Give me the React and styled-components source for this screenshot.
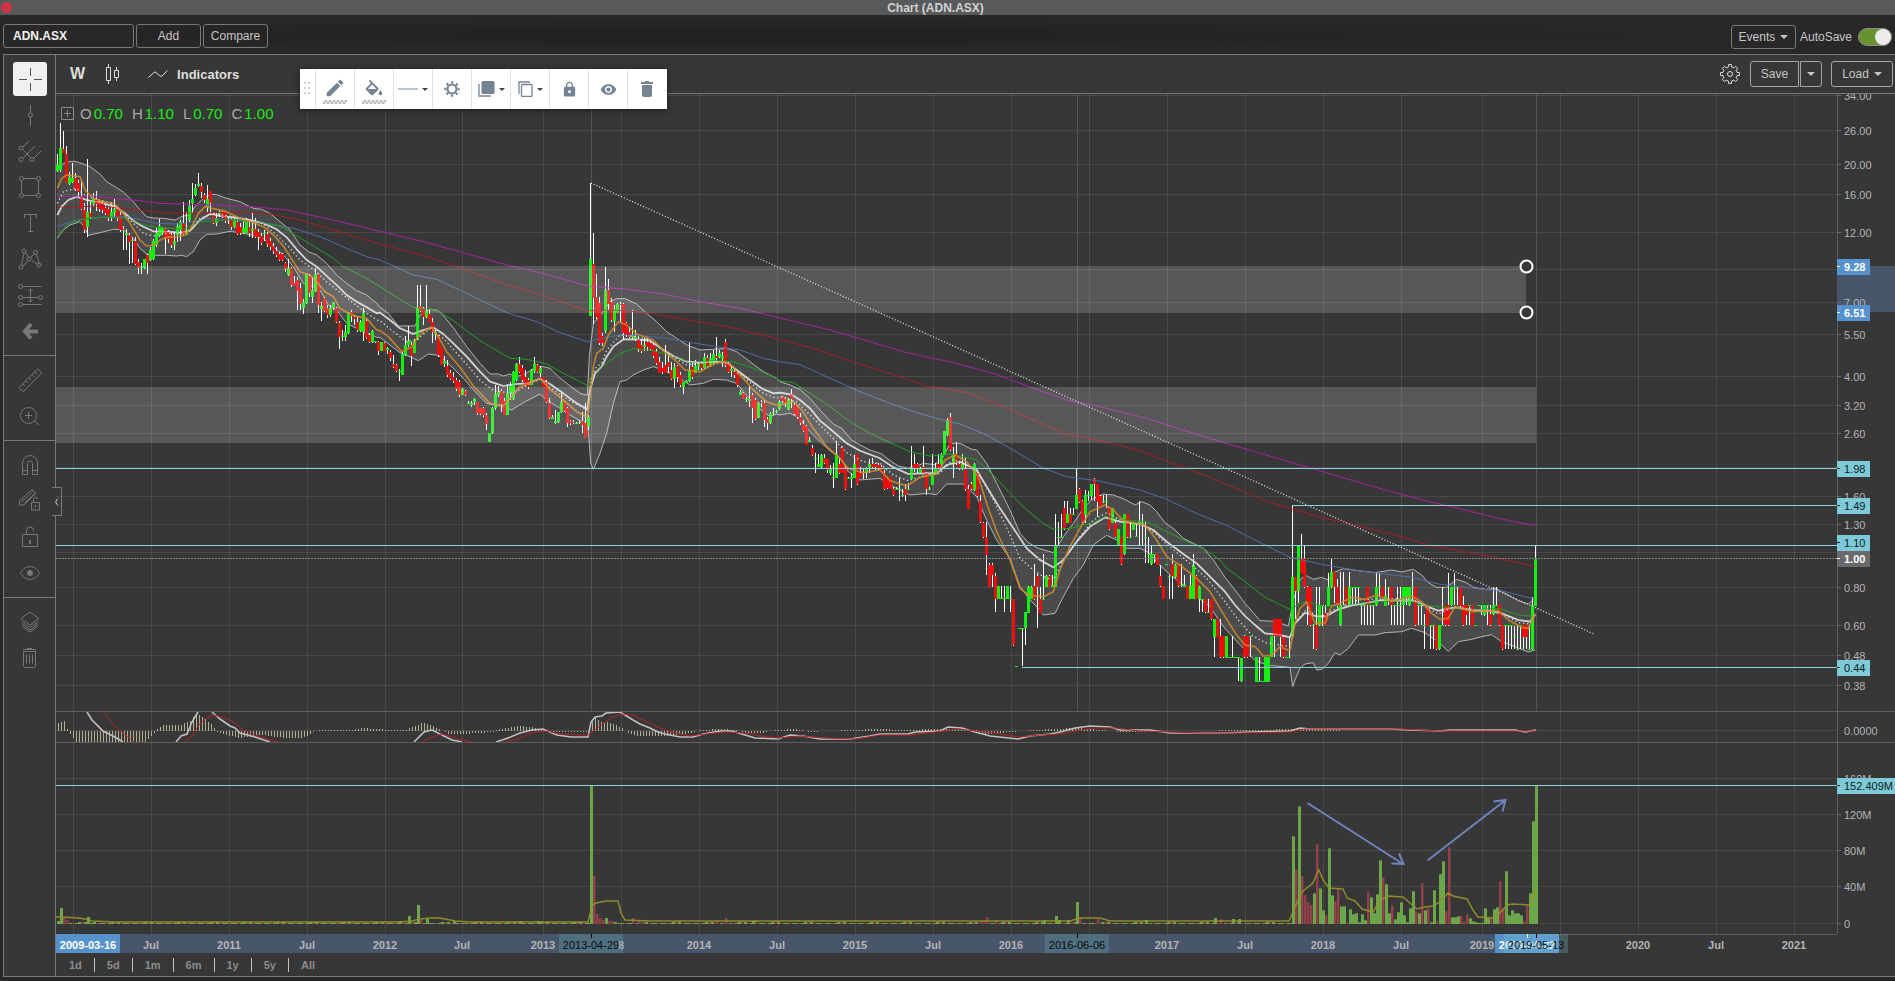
import React, { useState } from "react"
import styled, { createGlobalStyle, css } from "styled-components"
import { MdEdit, MdLock, MdVisibility } from "react-icons/md"

const panelColor = "#373737"
const headerColor = "#292728"
const borderColor = "#77787a"
const mutedColor = "#a9a9a9"
const levelColor = "#8fd0dd"
const tagColor = "#7fcad8"
const selectionColor = "#48566b"
const activeColor = "#5692cb"
const greenColor = "#12f012"
const redColor = "#ee0c0c"

const GlobalStyle = createGlobalStyle`
  * {
    box-sizing: border-box;
  }
  body {
    margin: 0;
    background: ${headerColor};
    font-family: "Liberation Sans", Arial, sans-serif;
    font-size: 12px;
  }
  button,
  input {
    font-family: inherit;
  }
`

const Window = styled.div`
  display: flex;
  flex-flow: column;
  min-height: 100vh;
  background: ${headerColor};
`

const TitleBar = styled.header`
  display: flex;
  align-items: center;
  height: 15px;
  padding: 0 36px 0 1px;
  background: #58595b;
  h1 {
    flex: 1;
    margin: 0;
    font-size: 12px;
    line-height: 14px;
    text-align: center;
    color: #d2d2d2;
  }
`

const CloseButton = styled.button`
  width: 11px;
  height: 11px;
  padding: 0;
  border: 0;
  border-radius: 50%;
  background: #cf3346;
`

const SymbolBar = styled.div`
  display: flex;
  align-items: center;
  gap: 2px;
  height: 39px;
  padding: 3px 3px 0;
  background: radial-gradient(ellipse at 40% 50%, #211f20 0%, #292728 60%);
`

const SymbolInput = styled.input`
  width: 131px;
  height: 24px;
  padding: 0 9px;
  border: 1px solid ${borderColor};
  border-radius: 3px;
  background: #292728;
  color: #f2f2f2;
  font-size: 12px;
  font-weight: bold;
`

const BarButton = styled.button`
  display: flex;
  align-items: center;
  justify-content: center;
  gap: 5px;
  width: ${(props) => props.$width || 65}px;
  height: 24px;
  margin-right: ${(props) => props.$gap || 0}px;
  padding: 0;
  border: 1px solid ${borderColor};
  border-radius: 3px;
  background: transparent;
  color: #c6c6c6;
  font-size: 12px;
  ${(props) =>
    props.$light &&
    css`
      height: 26px;
      border-color: #a5a5a5;
      border-radius: ${props.$radius || "3px"};
    `}
`

const Spacer = styled.div`
  flex: 1;
`

const Settings = styled.div`
  display: flex;
  align-items: center;
  gap: 2px;
  padding-top: 2px;
`

const SwitchLabel = styled.label`
  display: flex;
  align-items: center;
  gap: 6px;
  padding-left: 2px;
  color: #c6c6c6;
  font-size: 12px;
`

const Switch = styled.input`
  appearance: none;
  width: 34px;
  height: 18px;
  margin: 0;
  border: 1px solid #8c8c8c;
  border-radius: 9px;
  background: ${(props) => (props.checked ? "#66922f" : "#555")};
  &::before {
    content: "";
    display: block;
    width: 16px;
    height: 16px;
    margin-left: ${(props) => (props.checked ? "16px" : "0")};
    border-radius: 50%;
    background: #ececec;
  }
`

const Panel = styled.main`
  display: flex;
  margin-left: 3px;
  border: 1px solid ${borderColor};
  border-right: 0;
  background: ${panelColor};
`

const Sidebar = styled.aside`
  position: relative;
  width: 52px;
  border-right: 1px solid ${borderColor};
`

const ToolGroup = styled.div`
  display: flex;
  flex-flow: column;
  align-items: center;
  padding: 6px 0;
  border-bottom: ${(props) => (props.$last ? "0" : `1px solid ${borderColor}`)};
`

const ToolButton = styled.button`
  display: flex;
  align-items: center;
  justify-content: center;
  width: 36px;
  height: 36px;
  padding: 0;
  border: 1px solid transparent;
  border-radius: 4px;
  background: ${(props) => (props.$active ? "#f0f0f2" : "transparent")};
  background-clip: padding-box;
  color: ${(props) => (props.$active ? "#555" : "#77787a")};
  svg {
    fill: none;
    stroke: currentColor;
  }
`

const CollapseButton = styled.button`
  position: absolute;
  top: 432px;
  right: -7px;
  display: flex;
  align-items: center;
  justify-content: center;
  width: 10px;
  height: 29px;
  padding: 0;
  border: 1px solid ${borderColor};
  border-left: 0;
  background: ${panelColor};
`

const Content = styled.section`
  position: relative;
  flex: 1;
  min-width: 0;
`

const ChartBar = styled.div`
  display: flex;
  align-items: center;
  height: 39px;
  padding: 0 2px 0 14px;
  border-bottom: 1px solid ${borderColor};
`

const PlainButton = styled.button`
  display: flex;
  align-items: center;
  gap: 9px;
  margin-right: ${(props) => props.$gap || 0}px;
  padding: 0;
  border: 0;
  background: transparent;
  color: #dedede;
  font-size: ${(props) => props.$size || 13}px;
  font-weight: bold;
`

const Caret = styled.span`
  width: 0;
  border: ${(props) => (props.$small ? 3 : 4)}px solid transparent;
  border-top-color: ${(props) => (props.$small ? "#444" : "#c6c6c6")};
  border-bottom: 0;
`

const FloatingBar = styled.div`
  position: absolute;
  top: 14px;
  left: 244px;
  display: flex;
  height: 40px;
  padding-right: 1px;
  background: #fff;
  box-shadow: 0 1px 6px rgba(0, 0, 0, 0.6);
`

const Grip = styled.div`
  display: flex;
  align-items: center;
  justify-content: center;
  width: 15px;
`

const FloatButton = styled.button`
  display: flex;
  align-items: center;
  justify-content: center;
  gap: 4px;
  width: 39px;
  padding: 0;
  border: 0;
  border-left: 1px solid #e1e1e4;
  background: #fff;
  color: #758494;
`

const Swatch = styled.span`
  display: flex;
  flex-flow: column;
  align-items: center;
  gap: 1px;
  padding-top: 3px;
  &::after {
    content: "";
    width: 24px;
    height: 4px;
    background: repeating-conic-gradient(#b9b9b9 0 25%, #e6e6e6 0 50%) 0 0 / 4px 4px;
  }
`

const ChartRow = styled.div`
  display: flex;
`

const Plot = styled.svg`
  flex: 1;
  min-width: 0;
  height: 859px;
  overflow: hidden;
`

const Axis = styled.svg`
  width: 58px;
  height: 859px;
  overflow: hidden;
`

const Legend = styled.div`
  position: absolute;
  top: 50px;
  left: 5px;
  display: flex;
  align-items: center;
  gap: 9px;
  color: ${mutedColor};
  font-size: 15px;
  line-height: 17px;
  svg {
    margin-right: -3px;
  }
  b {
    padding-left: 2px;
    color: ${greenColor};
    font-weight: normal;
  }
`

const RangeBar = styled.nav`
  display: flex;
  align-items: center;
  height: 23px;
  padding-left: 1px;
`

const RangeButton = styled.button`
  height: 14px;
  padding: 0 12px;
  border: 0;
  border-right: ${(props) => (props.$last ? "0" : "1px solid #c4c4c4")};
  background: transparent;
  color: #8c8c8c;
  font-size: 11px;
  font-weight: bold;
  line-height: 14px;
`

/*
 * Series data. Values are stored in thirds of a pixel, split into blocks
 * that each have their own origin.
 * Candle: colour x high low bodyTop bodyBottom
 */
const blocks = [
  {
    x: 0,
    y: 0,
    candles: `g 172 462 515 495 512;g 181 369 515 445 510;r 190 393 460 448 460;r 199 438 550 462 550;g 208 515 555 530 552;
g 217 490 548 535 545;r 226 518 572 535 568;r 235 540 590 550 575;r 244 540 630 590 628;r 253 608 700 630 690;g 262 478 710 637 682;
r 271 605 655 638 652;g 280 580 620 597 612;r 289 573 632 600 612;r 298 600 635 605 628;r 307 600 640 610 630;r 316 615 645 625 638;
r 325 620 664 628 652;g 334 605 664 635 650;g 343 598 650 628 640;r 352 620 662 627 655;r 361 635 695 645 690;r 370 678 750 686 690;
g 379 688 750 698 704;r 388 700 792 705 726;g 397 715 790 720 724;r 406 712 795 722 792;r 415 778 822 785 805;g 424 790 822 800 804;
g 433 778 808 778 805;r 442 762 822 765 790;g 451 740 782 750 780;g 460 718 780 722 778;g 469 685 740 698 736;g 478 657 712 678 708;
g 487 680 705 684 700;r 496 685 762 688 714;r 505 690 730 696 718;r 514 700 745 704 736;g 523 695 750 722 736;g 532 668 725 680 704;
g 541 660 722 665 690;r 550 606 705 668 702;g 559 635 705 690 704;g 568 600 665 618 660;g 577 550 640 597 608;g 586 552 588 564 584;
g 595 519 560 552 558;r 604 550 595 558 575;r 613 580 610 586 600;g 622 556 635 596 620;r 631 573 640 573 608;r 640 640 672 645 668;
g 649 640 678 655 668;g 658 630 650 636 642;r 667 632 655 636 650;r 676 635 668 638 662;g 685 650 672 656 660;r 694 655 690 658 680;
g 703 650 685 658 680;r 712 652 705 665 702;r 721 670 705 680 700;g 730 662 702 685 698;g 739 655 700 664 700;r 748 660 712 680 700;
g 757 635 715 688 692;r 766 655 715 688 712;r 775 688 750 696 712;r 784 700 735 708 728;g 793 690 722 698 702;r 802 695 740 702 732;
r 811 715 750 722 742;r 820 730 762 738 752;r 829 740 770 752 766;r 838 755 782 762 780;r 847 758 782 762 780;r 856 785 815 790 808;
g 865 778 828 805 826;r 874 800 860 804 856;r 883 828 858 850 858;r 892 830 930 840 872;r 901 850 930 865 912;g 910 898 942 905 925;
g 919 820 912 822 910;r 928 822 890 828 880;g 937 830 908 870 892;g 946 803 875 822 872;r 955 820 940 822 915;g 964 905 962 918 926;
r 973 890 935 894 932;r 982 915 955 925 945;g 991 915 952 925 945;g 1000 905 930 908 925;r 1009 922 968 925 965;r 1018 962 1048 968 1012;
g 1027 990 1022 1008 1012;g 1036 975 1022 995 1012;g 1045 935 1002 936 1000;r 1054 930 965 936 948;r 1063 945 975 952 958;
r 1072 948 995 965 990;g 1081 960 995 965 992;g 1090 925 1022 940 995;r 1099 958 1018 962 1014;r 1108 1000 1030 1005 1025;
g 1117 990 1028 992 1025;g 1126 1022 1028 1022 1026;r 1135 1022 1065 1025 1053`,
    upper:
      "172,510 190,490 210,484 225,484 250,492 270,500 300,522 320,545 345,560 370,576 400,605 420,630 440,650 460,654 490,655 525,660 550,648 570,645 585,620 605,600 630,583 650,584 680,595 720,605 760,625 785,628 810,640 840,665 870,690 900,735 925,755 950,765 980,790 1010,825 1040,850 1070,872 1100,885 1130,910",
    lower:
      "172,715 190,690 210,675 240,665 253,680 265,706 300,698 340,688 370,690 400,715 420,745 440,762 460,766 500,766 530,768 545,766 560,770 580,755 600,720 620,703 650,702 690,694 720,698 755,705 790,716 820,740 850,765 880,800 910,850 940,860 960,870 985,915 1010,930 1040,970 1070,985 1100,1000 1130,1012",
    mid: "172,645 185,620 205,600 230,590 260,600 300,608 345,620 375,640 400,662 430,680 460,694 500,695 540,698 570,692 600,660 630,642 660,648 700,652 740,658 790,670 830,688 860,712 890,748 920,780 950,800 980,828 1010,855 1040,885 1070,905 1100,922 1130,940",
    dots: "172,610 190,575 230,565 260,590 300,600 345,615 375,645 400,670 430,700 460,708 500,700 540,700 575,690 600,655 640,640 700,650 790,672 830,705 870,745 900,780 940,808 980,845 1030,885 1080,925 1130,960",
    orange:
      "172,565 185,535 200,525 240,530 255,570 280,595 310,605 345,612 370,640 390,670 420,720 440,738 465,735 480,720 500,712 530,710 555,705 575,680 595,640 615,620 640,626 680,635 720,655 760,668 790,680 820,705 850,738 880,785 900,815 930,825 950,845 975,875 1000,890 1020,925 1045,940 1075,950 1100,955 1130,990",
    green:
      "172,712 200,675 240,660 300,652 380,655 430,675 470,682 550,688 600,665 700,658 760,665 840,678 880,702 940,738 1000,775 1030,800 1090,830",
    blue: "172,680 220,662 300,652 380,650 470,670 540,672 630,655 700,660 800,670 880,685 960,710 1040,745 1100,770",
    red: "172,622 300,618 400,628 500,640 600,638 720,636 800,640 900,660 1000,690",
    purple: "172,590 300,590 400,600 480,610 640,615 760,620 860,630 1000,660",
  },
  {
    x: 1140,
    y: 690,
    candles: `g 4 335 362 335 362;r 13 335 362 338 362;g 22 352 372 354 360;r 31 360 392 366 384;r 40 375 415 402 412;r 49 402 425 405 424;
g 58 418 453 422 426;g 67 365 435 372 434;g 76 318 378 345 376;g 85 288 350 332 345;r 94 335 408 345 378;g 103 328 370 332 368;
g 112 165 330 235 330;r 121 165 246 228 244;r 130 232 285 238 262;g 139 165 265 242 262;r 148 240 275 252 275;r 157 265 340 275 305;
g 166 300 330 306 312;r 175 315 380 320 375;r 184 350 405 352 404;g 193 378 412 392 402;r 202 390 440 408 434;r 211 420 450 428 448;
r 220 425 460 440 452;r 229 445 482 450 478;r 238 450 500 455 495;g 247 475 495 478 494;r 256 480 498 484 496;g 265 514 520 518 522;
g 274 514 530 518 524;g 283 505 525 508 516;r 292 515 555 516 548;r 301 535 555 535 552;r 310 530 560 535 555;r 319 550 600 555 582;
g 328 608 636 610 636;g 337 530 612 535 610;g 346 465 540 492 535;g 355 468 500 485 495;r 364 478 545 482 522;r 373 505 556 512 554;
g 382 462 556 490 554;g 391 455 510 468 490;g 400 422 510 425 508;g 409 400 452 403 450;r 418 380 430 403 425;r 427 405 455 415 450;
r 436 420 470 440 468;r 445 445 478 450 470;g 454 418 466 420 464;g 463 380 430 403 424;r 472 403 430 405 425;g 481 408 440 415 428;
r 490 440 472 442 470;r 499 450 520 455 515;r 508 505 566 518 564;g 517 556 568 562 566;g 526 540 582 572 580;g 535 545 580 545 576;
g 544 490 548 515 545;r 553 512 545 515 542;r 562 530 590 535 580;r 571 570 585 572 580;r 580 570 582 576 580;g 589 576 582 578 582;
g 598 570 582 576 580;r 607 545 610 572 585;r 616 520 625 580 624;g 625 555 600 560 590;g 632 -140 258 88 258;r 641 8 282 102 204;
r 650 132 268 200 262;r 659 200 345 218 340;r 668 310 348 318 338;g 677 112 308 180 304;r 686 147 240 180 222;r 695 205 275 215 270;
g 704 225 305 238 272;g 713 218 250 222 245;r 722 215 275 222 226;r 731 220 330 222 310;r 740 275 320 280 316;r 749 290 325 305 320;
g 758 240 330 315 322;g 767 300 332 322 328;r 776 315 365 328 358;r 785 330 368 345 364;g 794 325 364 345 350;r 803 325 362 335 352;
r 812 335 362 340 358;r 821 340 385 345 378;r 830 358 405 365 400;r 839 380 430 395 428;r 848 395 432 415 426;r 857 345 430 405 428;
r 866 368 430 395 410;r 875 395 450 420 446;g 884 400 475 410 448;r 893 405 455 408 440;r 902 425 470 435 464;g 911 455 492 455 470;
g 920 450 460 452 458;g 929 335 455 420 454;r 938 400 448 412 442;g 947 390 430 408 428;g 956 395 420 403 408;r 965 395 420 400 415;
g 974 368 418 380 415;r 983 375 412 385 408;g 992 368 410 385 405;g 1001 360 405 372 400;r 1010 322 395 378 385;g 1019 360 385 370 380;
g 1028 365 410 378 388;r 1037 328 410 335 405;r 1046 392 430 398 426;g 1055 405 440 418 424;r 1064 415 445 425 434;r 1073 425 470 432 464;
g 1082 480 496 486 494;r 1091 485 508 490 506;g 1100 500 515 506 510;g 1109 465 530 508 512;r 1118 490 580 495 535;r 1127 505 570 510 566;
g 1136 515 565 518 564;r 1145 510 530 515 520;r 1154 510 590 518 570;r 1163 560 600 568 580;g 1172 545 582 552 580;g 1181 535 555 545 550;
g 1190 540 548 542 546;g 1199 510 540 516 538`,
    upper:
      "0,232 25,250 55,288 105,288 120,255 150,238 175,242 195,262 225,300 260,350 300,400 330,432 355,432 370,438 390,432 405,440 430,435 470,410 490,410 510,415 535,440 560,460 600,490 622,496 628,380 640,280 660,258 690,215 710,206 735,206 770,222 800,250 830,275 860,305 890,325 920,345 960,360 1000,358 1040,355 1070,365 1110,395 1150,425 1190,445",
    lower:
      "0,322 30,345 60,368 90,380 115,392 145,372 175,376 210,405 250,445 290,490 320,520 360,528 395,540 430,518 480,492 500,510 540,535 570,555 610,578 622,570 628,640 632,700 640,718 660,670 680,610 700,520 720,455 740,450 760,435 790,420 820,410 850,420 890,440 930,465 970,460 1000,448 1040,450 1070,460 1090,485 1120,520 1150,545 1170,560 1190,552",
    mid: "0,248 30,270 60,295 100,312 130,300 160,292 190,312 220,340 260,380 300,425 330,455 370,468 410,462 440,460 480,446 510,462 550,490 590,520 622,538 630,480 645,430 665,410 680,380 700,350 730,328 770,328 810,332 850,360 880,378 920,395 960,398 1000,395 1040,398 1070,420 1110,450 1150,478 1180,490",
    dots: "0,272 40,305 80,335 110,330 150,295 190,325 240,380 300,450 340,482 400,490 440,465 480,448 520,480 570,512 622,540 632,450 650,410 665,400 680,360 720,315 770,320 810,330 860,370 920,405 1000,395 1050,402 1100,450 1150,490 1190,505",
    orange:
      "0,302 25,320 65,365 95,352 110,325 135,300 155,292 175,320 200,365 240,412 280,468 330,520 370,528 390,505 420,470 445,462 480,445 510,478 550,510 590,545 622,562 630,500 640,410 650,370 670,355 685,315 715,275 740,285 770,312 820,330 850,362 890,395 915,420 960,425 1000,402 1030,395 1050,402 1085,440 1120,480 1160,515 1190,525",
    green:
      "0,170 50,202 100,232 170,240 220,272 300,332 390,385 440,388 500,402 560,435 622,466 640,430 680,400 720,370 760,356 810,360 870,375 930,398 1000,392 1060,395 1120,415 1180,440",
    blue: "0,90 100,135 170,148 260,190 380,248 470,275 540,308 622,335 700,318 760,315 860,325 960,342 1080,360 1150,385",
    red: "0,42 150,82 260,120 370,162 470,190 622,242 700,240 800,248 900,265 1050,292",
    purple: "0,4 130,35 250,68 380,105 500,133 622,168 740,178 850,192 960,215 1080,235",
  },
  {
    x: 2340,
    y: 990,
    candles: `r 8 198 220 202 212;r 17 200 232 205 222;g 26 205 240 208 236;r 35 178 235 192 208;r 44 215 255 226 252;r 53 225 268 230 262;
r 62 250 285 262 280;r 71 270 305 282 302;r 80 285 346 288 344;g 89 320 336 330 335;r 98 345 378 354 374;g 107 370 428 384 388;
g 116 373 412 402 412;g 125 373 415 376 412;r 134 372 402 385 400;r 143 388 428 388 420;g 152 405 435 415 430;g 161 400 475 440 445;
g 170 335 445 372 445;r 179 380 432 402 430;r 188 348 430 350 428;r 197 410 480 415 478;g 206 440 448 443 447;g 215 430 474 440 446;
g 224 375 445 402 444;r 233 373 465 373 462;r 242 410 440 430 440;g 251 415 446 426 430;g 260 412 445 418 430;g 269 388 430 402 412;
r 278 385 415 402 412;r 287 400 420 402 412;r 296 400 420 404 414;r 305 405 430 412 428;r 314 420 480 428 478;r 323 440 478 445 475;
r 332 440 478 440 478;r 341 470 497 478 496;g 350 472 480 476 480;g 359 445 514 476 480;g 368 478 500 494 498;r 377 462 512 478 496;
g 386 460 478 476 480;g 395 348 448 416 446;r 404 372 425 402 418;r 413 400 430 402 415;g 422 410 432 414 430;r 431 348 430 410 428;
r 440 425 494 430 478;g 449 472 480 476 480;g 458 372 464 428 464;g 467 400 430 415 430;r 476 372 415 403 415;g 485 370 405 375 403;
g 494 302 375 304 374;g 503 265 318 270 314;r 512 248 362 262 360;g 521 350 444 372 400;r 530 335 405 372 400;r 539 395 420 402 415;
g 548 372 420 402 415;r 557 385 482 415 478;r 566 465 538 478 536;r 575 455 480 462 478;g 584 400 482 402 480;r 593 420 500 430 498;
r 602 495 578 512 576;r 611 575 625 578 622;r 620 575 735 622 674;r 629 700 772 704 770;r 638 700 770 704 735;r 647 730 845 737 808;
g 656 768 808 768 806;g 665 768 808 803 808;g 674 768 845 804 808;g 683 768 808 768 806;g 692 768 845 804 808;r 701 808 948 808 946;
g 710 1008 1011 1008 1011;g 719 894 897 894 897;g 728 894 1008 894 897;g 737 845 945 846 895;g 746 768 850 770 848;g 755 768 808 770 808;
r 764 702 810 768 808;r 773 732 893 737 772;r 782 770 850 808 848;g 791 672 808 806 809;g 800 735 770 737 770;r 809 735 770 737 770;
g 818 735 770 766 770;g 827 552 772 646 770;g 836 575 645 620 624;g 845 552 625 620 624;r 854 514 600 534 598;g 863 514 580 552 578;
r 872 534 580 552 578;g 881 534 555 552 555;g 890 416 538 495 536;r 899 475 518 478 515;r 908 510 578 514 576;g 917 480 578 495 555;
g 926 482 512 494 498;g 935 462 510 462 498;r 944 444 512 446 462;r 953 462 560 462 515;r 962 495 535 498 534;g 971 495 520 512 516;
g 980 495 535 512 516;r 989 530 600 534 598;g 998 535 578 535 578;r 1007 570 625 578 622;g 1016 598 648 598 648;r 1025 622 704 622 702;
g 1034 552 674 552 672;r 1043 552 625 552 622;g 1052 575 622 620 623;g 1061 578 600 578 600;g 1070 578 622 619 622;g 1079 514 645 575 578;
g 1088 552 645 578 582;g 1097 575 700 620 623;g 1106 622 700 672 675;g 1115 645 704 672 702;g 1124 672 700 673 676;r 1133 672 705 672 704;
r 1142 704 770 737 768;r 1151 768 808 768 808;g 1160 702 706 702 706;g 1169 735 806 737 740;r 1178 672 806 702 738;g 1187 702 745 704 740;
r 1196 702 770 704 768;g 1205 702 770 766 769;g 1214 735 770 766 770;r 1223 768 808 768 808;g 1232 735 808 768 808;g 1241 672 808 704 806;
r 1250 735 808 737 806;g 1259 768 845 770 808;g 1268 808 845 806 810;r 1277 806 848 808 846;g 1286 808 848 845 848;r 1295 806 870 808 868;
g 1304 866 980 868 920;r 1313 866 920 868 920;r 1322 866 985 918 982;r 1331 918 985 918 982`,
    upper:
      "0,155 30,165 60,178 90,205 120,240 160,282 185,295 215,330 240,345 270,360 305,372 330,392 355,408 385,415 410,408 430,400 465,404 490,380 510,340 540,340 575,358 590,360 620,400 650,460 690,540 720,610 745,638 775,655 820,668 850,620 880,580 910,535 940,505 970,492 1000,495 1035,508 1065,525 1085,515 1110,525 1130,545 1155,578 1185,600 1210,625 1240,640 1270,655 1300,690",
    lower:
      "0,255 30,250 55,262 90,305 120,335 150,362 180,385 205,425 240,450 300,445 330,465 360,480 390,495 440,490 470,494 500,462 550,462 590,500 620,570 650,630 690,685 720,770 750,810 775,835 790,855 825,850 850,800 880,745 910,705 940,645 980,616 1010,630 1040,655 1080,655 1110,670 1135,702 1160,725 1190,750 1220,772 1250,800 1290,830 1320,875",
    mid: "0,188 35,194 60,210 90,235 120,272 160,305 200,340 240,362 300,385 340,412 385,432 420,430 470,430 500,405 540,395 590,420 620,470 660,535 700,595 740,655 780,690 820,712 850,690 890,635 930,590 975,562 1020,575 1080,582 1120,600 1160,635 1210,672 1250,700 1290,740",
    dots: "0,200 50,215 100,265 150,315 200,368 250,395 300,400 340,435 385,452 430,438 480,430 520,388 590,420 640,510 690,615 720,685 760,720 790,740 820,750 850,690 900,620 940,570 980,548 1030,575 1090,585 1130,615 1180,660 1230,700 1280,745",
    orange:
      "0,225 40,215 65,240 100,295 140,350 175,380 205,415 250,428 300,420 330,452 380,468 420,442 470,432 495,390 525,375 560,395 595,440 620,520 650,605 690,690 720,775 745,795 790,800 820,785 840,720 870,650 900,595 930,545 975,525 1000,540 1030,572 1095,585 1130,630 1160,680 1200,705 1250,745 1290,785",
    green:
      "0,152 40,158 90,190 150,230 210,275 270,310 330,338 390,365 450,378 510,372 590,390 640,435 690,490 740,540 790,580 820,598 870,595 930,580 980,560 1040,570 1100,575 1150,600 1210,630 1270,655 1320,690",
    blue: "0,95 60,104 150,145 240,185 330,220 400,245 470,265 540,282 620,315 700,360 790,415 860,440 950,452 1080,480 1160,508 1260,555",
    red: "0,28 100,55 230,100 330,130 440,168 560,188 660,225 780,278 860,312 960,332 1080,362 1180,402 1260,430",
    purple: "150,0 280,38 380,68 520,98 640,130 760,175 860,210 960,230 1100,265 1240,310 1380,352",
  },
  {
    x: 3675,
    y: 1470,
    candles: `g 5 438 503 438 503;g 14 500 503 500 503;g 23 438 500 500 503;g 32 500 503 500 503;g 41 503 572 500 503;g 50 503 575 503 574;
r 59 436 503 438 502;r 68 438 503 438 502;g 77 438 500 437 440;g 95 500 576 502 575;g 104 502 574 572 576;g 113 572 576 572 576;
g 122 502 576 502 575;g 131 502 576 502 575;g 140 438 502 438 502;r 149 388 500 388 438;r 158 388 438 388 438;r 167 388 500 388 440;
r 176 438 503 440 502;g 185 500 503 500 503;g 194 440 503 500 503;g 203 46 442 262 440;r 212 262 388 262 302;g 221 165 340 166 302;
r 230 133 250 204 248;r 239 165 295 205 292;r 248 288 405 292 348;r 257 290 408 292 406;g 266 402 476 404 407;r 275 292 480 406 478;
g 284 290 408 346 406;g 293 345 408 345 348;r 302 345 405 370 405;g 311 250 348 292 348;g 320 207 295 246 292;r 329 245 340 246 292;
r 338 268 350 292 346;g 347 245 408 346 406;g 356 245 348 345 348;r 365 290 348 292 346;g 374 245 348 292 346;g 383 290 345 290 293;
g 392 290 345 290 293;g 401 290 345 290 293;g 410 345 405 345 348;g 419 345 405 345 348;r 428 290 405 292 346;g 437 345 405 345 348;
g 446 345 405 345 348;g 455 245 348 292 346;g 464 250 320 290 293;r 473 290 320 292 320;g 482 268 348 318 348;g 491 292 345 290 293;
r 500 290 405 292 346;g 509 345 405 345 348;g 518 292 405 345 348;g 527 292 405 345 348;g 536 292 405 292 346;g 545 292 346 292 320;
g 554 292 348 292 346;g 563 245 330 290 293;r 572 290 408 292 406;g 581 345 405 345 348;g 590 345 405 345 348;g 599 372 476 404 407;
r 608 345 408 346 407;g 617 405 476 404 407;g 626 405 476 404 407;r 635 405 480 406 478;g 644 405 480 406 478;g 653 292 405 404 407;
r 662 345 408 346 406;r 671 250 408 346 406;g 680 290 348 292 345;g 689 250 345 290 293;g 698 290 345 290 293;r 707 290 350 292 348;
r 716 318 408 346 406;r 725 345 405 346 375;g 734 350 405 345 348;r 743 345 408 346 407;g 752 404 407 404 407;g 761 345 348 345 348;
g 770 345 375 345 348;g 779 345 378 346 374;g 788 346 405 345 348;r 797 345 408 372 405;g 806 292 375 346 372;g 815 292 346 345 348;
r 824 345 408 346 404;r 833 405 480 406 478;g 842 408 476 405 408;g 851 408 476 405 408;g 860 408 476 405 408;g 869 408 476 437 440;
g 878 408 476 476 480;g 887 408 476 405 408;r 896 405 476 406 440;r 905 405 476 406 440;g 914 405 476 476 480;g 923 320 480 346 478;
g 932 165 348 206 348`,
    upper:
      "0,262 30,300 60,340 85,368 105,392 150,394 190,408 205,330 225,270 240,255 265,268 290,262 310,270 325,248 355,236 400,242 450,248 500,240 530,246 565,238 590,255 610,278 635,292 665,292 695,268 725,278 745,292 780,298 815,296 850,315 880,332 910,342 930,325",
    lower:
      "0,415 30,448 60,480 90,512 130,526 195,532 203,590 212,565 225,535 240,522 265,518 275,540 290,538 310,520 330,488 345,495 370,475 400,435 450,435 480,428 530,425 560,415 600,428 630,450 650,465 670,484 700,455 740,448 770,440 800,434 830,455 870,470 910,486 930,480",
    mid: "0,305 30,345 60,378 90,405 120,430 160,434 195,442 210,400 240,368 270,378 300,380 340,358 380,346 420,340 470,330 530,332 570,332 610,350 640,362 690,352 740,360 790,362 830,370 880,390 915,395 930,375",
    dots: "0,335 40,390 80,435 120,458 195,470 210,400 240,362 290,380 340,352 400,330 480,325 560,328 610,355 640,372 690,350 760,362 820,365 880,398 915,402 930,375",
    orange:
      "0,380 35,435 60,465 90,470 115,498 140,496 165,470 195,482 210,400 225,355 245,336 270,400 300,400 320,348 345,340 380,322 420,328 455,315 500,335 560,318 590,335 620,370 645,388 670,385 690,350 740,365 820,362 850,390 890,412 910,415 930,370",
    green:
      "0,230 60,275 120,322 195,358 240,335 300,350 380,344 450,335 560,332 620,348 740,360 820,355 880,375 930,380",
    blue: "0,104 80,145 195,202 300,225 400,242 480,252 560,262 640,282 740,294 840,305 930,328",
    red: "45,0 120,32 195,55 300,85 400,108 500,132 600,162 700,182 800,200 930,230",
    purple: "480,0 600,32 720,60 850,92 930,106",
  },
]

const candles = blocks.flatMap((block) =>
  block.candles.split(";").map((row) => {
    const [color, x, high, low, top, bottom] = row.trim().split(" ")
    return {
      color: color === "g" ? greenColor : redColor,
      x: block.x + Number(x),
      high: block.y + Number(high),
      low: block.y + Number(low),
      top: block.y + Number(top),
      bottom: block.y + Number(bottom),
    }
  }),
)

function joinSeries(key) {
  return blocks.flatMap((block) =>
    block[key].split(" ").map((point) => {
      const [x, y] = point.split(",").map(Number)
      return [block.x + x, block.y + y]
    }),
  )
}

const upper = joinSeries("upper")
const lower = joinSeries("lower")
const bandArea = [...upper, ...[...lower].reverse()].join(" ")

const averages = [
  { key: "purple", color: "#a623a6" },
  { key: "red", color: "#a51f1f" },
  { key: "blue", color: "#4a6fa8" },
  { key: "green", color: "#22a022" },
]

const priceTicks = [
  [34, "34.00"],
  [26, "26.00"],
  [20, "20.00"],
  [16, "16.00"],
  [12, "12.00"],
  [9, ""],
  [7, "7.00"],
  [5.5, "5.50"],
  [4, "4.00"],
  [3.2, "3.20"],
  [2.6, "2.60"],
  [2, ""],
  [1.6, "1.60"],
  [1.3, "1.30"],
  [1.05, ""],
  [0.8, "0.80"],
  [0.6, "0.60"],
  [0.48, "0.48"],
  [0.38, "0.38"],
]

function priceToY(price) {
  return Math.round(130 + 131.4 * Math.log(26 / price)) + 0.5
}

const volumeTicks = [
  [778.5, "160M"],
  [814.5, "120M"],
  [850.5, "80M"],
  [886.5, "40M"],
  [923.5, "0"],
]

const timeTicks = [
  [73, ""],
  [151, "Jul"],
  [229, "2011"],
  [307, "Jul"],
  [385, "2012"],
  [462, "Jul"],
  [543, "2013"],
  [621, ""],
  [699, "2014"],
  [777, "Jul"],
  [855, "2015"],
  [933, "Jul"],
  [1011, "2016"],
  [1089, ""],
  [1167, "2017"],
  [1245, "Jul"],
  [1323, "2018"],
  [1401, "Jul"],
  [1482, "2019"],
  [1560, ""],
  [1638, "2020"],
  [1716, "Jul"],
  [1794, "2021"],
]

const macdLine = [
  "87,712 92,720 103,731 113,736 123,742",
  "176,742 181,736 187,734 192,722 198,712",
  "212,712 220,719 230,726 235,728 240,733 255,737 270,742",
  "414,742 424,732 432,730 442,735 452,740 462,742",
  "496,742 508,738 520,733 532,730 543,729 547,731 557,735 571,737 588,737 591,722 595,717 602,716 606,713 620,712 633,720 640,724 650,728 658,732 665,734 680,737 693,737 703,734 720,731 732,731 745,735 755,738 778,739 790,735 803,736 820,739 850,739 870,736 880,734 908,734 915,732 940,731 948,727 962,728 975,732 990,736 1018,739 1030,736 1050,734 1060,732 1075,728 1090,726 1110,727 1120,730 1150,730 1170,733 1190,733 1220,733 1250,732 1290,731 1300,728 1310,729 1390,729 1410,730 1440,731 1450,730 1515,730 1525,732 1536,730",
]

const signalLine = [
  "103,712 113,724 123,733 134,742",
  "184,742 192,736 198,726 206,718 213,715 222,717 232,721 243,730 260,737 278,742",
  "422,742 432,737 442,734 455,738 472,742",
  "505,742 520,738 532,733 545,731 560,734 588,735 600,726 612,717 622,714 633,715 645,721 660,728 675,733 690,736 705,734 725,732 745,733 760,736 778,738 800,736 825,738 855,739 880,735 910,735 935,732 958,729 975,731 995,733 1018,737 1040,735 1060,734 1075,731 1095,728 1115,728 1140,731 1170,732 1200,733 1240,733 1290,732 1305,729 1400,729 1440,731 1536,731",
]

// [x, height] key points, the bars between them are interpolated
const histogramKeys = [
  [58, 8], [64, 10], [67, 2], [70, -3], [76, -11], [145, -11], [154, -2], [157, 2], [163, 6], [180, 6],
  [190, 10], [196, 17], [202, 14], [213, 5], [216, -1], [230, -5], [240, -7], [262, -4], [285, -7],
  [303, -7], [312, -2], [317, 1], [350, 1], [362, 3], [390, 1], [405, 1], [412, 4], [422, 8], [428, 7],
  [440, 1], [448, -3], [465, -3], [492, -1], [500, 2], [518, 5], [530, 4], [545, 1], [550, -1], [588, -1],
  [591, 10], [595, 13], [603, 7], [607, 9], [615, 6], [622, 3], [626, -1], [636, -5], [666, -5], [690, -2],
  [700, 1], [720, 2], [735, 1], [745, -2], [762, -2], [776, 1], [795, 2], [810, -1], [850, 1], [880, 2],
  [900, 1], [940, 2], [955, 2], [975, 1], [985, -3], [1010, -1], [1035, 1], [1075, 3], [1100, 1],
  [1120, -1], [1250, 1], [1300, 2], [1340, 1],
]

const histogram = []
for (let i = 0; i < histogramKeys.length - 1; i += 1) {
  const [x1, h1] = histogramKeys[i]
  const [x2, h2] = histogramKeys[i + 1]
  for (let x = Math.ceil((x1 - 58) / 3) * 3 + 58; x < x2; x += 3) {
    const height = Math.round(h1 + ((h2 - h1) * (x - x1)) / (x2 - x1))
    if (height !== 0) histogram.push({ x, height })
  }
}

const volumePeaks = {
  58: "g3", 61: "g16", 64: "r6", 67: "r4", 88: "g7", 94: "g2", 400: "g3", 409: "g8", 418: "g19", 421: "r4", 427: "g5",
  454: "g3", 520: "g3", 538: "g3", 591: "g138", 594: "r48", 597: "r10", 600: "r6", 603: "r4", 606: "g6", 609: "r3", 612: "r3",
  615: "g2", 633: "r6", 639: "r3", 717: "r4", 726: "r6", 753: "g3", 756: "r4", 981: "r3", 984: "r3", 987: "r7", 996: "r4",
  1044: "g4", 1056: "g8", 1059: "g4", 1068: "g4", 1077: "g22", 1080: "r6", 1098: "r5", 1146: "g4", 1215: "g6", 1221: "r5",
  1233: "g5", 1239: "g5",
}

const lateVolume =
  "g263 r164 g353 r143 r86 r65 r56 g92 r239 g107 g41 r26 g227 g86 r68 r107 g53 g53 r5 g44 g29 g32 g5 g29 g11 r98 g80 g32 g89 g191 r140 g119 g32 r56 g14 g35 g65 g26 g5 g47 g98 r38 g32 r122 g41 r47 g5 g101 r8 g149 g188 r38 r230 g20 g20 g23 r23 r8 r29 g17 g8 g5 g3 g3 g47 g17 r17 g44 g50 r128 r47 g158 g26 g41 g32 g32 g26 r8 r56 g92 g308 g415"

const volumeBars = []
const peakAt = Object.keys(volumePeaks).map(Number)
for (let x = 58; x < 1292; x += 3) {
  const seed = (x * 37) % 11
  const near = peakAt.find((peak) => Math.abs(peak - x) < 2)
  const value = near ? volumePeaks[near] : `${seed % 3 ? "g" : "r"}${seed > 7 ? 2 : 1}`
  volumeBars.push({ x: near || x, up: value[0] === "g", height: Number(value.slice(1)) })
}
lateVolume.split(" ").forEach((value, index) => {
  volumeBars.push({ x: 1293 + index * 3, up: value[0] === "g", height: Number(value.slice(1)) / 3 })
})

const volumeAverage =
  "56,917 62,917 78,918 85,919 92,921 115,922 400,922 412,921 420,919 430,918 440,918 455,921 470,922 588,922 592,906 596,903 606,901 618,901 621,913 625,920 650,921 1070,921 1080,918 1100,918 1110,921 1289,921 1295,907 1302,892 1308,887 1313,883 1317,873 1319,870 1323,880 1329,888 1343,889 1347,898 1355,901 1362,909 1373,912 1380,900 1388,896 1403,897 1410,903 1417,909 1425,907 1433,906 1440,902 1448,893 1453,896 1467,899 1473,910 1478,917 1493,918 1500,913 1507,905 1513,904 1530,905 1536,888"

const levels = [
  { x: 56, y: 468.5 },
  { x: 56, y: 545.5 },
  { x: 1292, y: 505.5 },
  { x: 1022, y: 667.5 },
  { x: 56, y: 785.5 },
]

const priceTags = [
  { y: 259, label: "9.28", bg: activeColor, color: "#fff", bold: true },
  { y: 305, label: "6.51", bg: activeColor, color: "#fff", bold: true },
  { y: 461, label: "1.98", bg: tagColor },
  { y: 498, label: "1.49", bg: tagColor },
  { y: 535, label: "1.10", bg: tagColor },
  { y: 551, label: "1.00", bg: "#6a6a6a", color: "#fff", bold: true },
  { y: 660, label: "0.44", bg: tagColor },
  { y: 778, label: "152.409M", bg: tagColor, width: 58 },
]

function gearPath(center, outer, inner, teeth) {
  const points = []
  const step = (Math.PI * 2) / teeth
  for (let i = 0; i < teeth; i += 1) {
    const angle = i * step - Math.PI / 2
    const corners = [
      [outer, -0.2],
      [outer, 0.2],
      [inner, 0.28],
      [inner, 0.72],
    ]
    corners.forEach(([radius, part]) => {
      const x = center + radius * Math.cos(angle + part * step)
      const y = center + radius * Math.sin(angle + part * step)
      points.push(`${x.toFixed(2)},${y.toFixed(2)}`)
    })
  }
  return points.join(" ")
}

function Points({ dots, r = 2 }) {
  return dots.map(([cx, cy]) => <circle key={`${cx}-${cy}`} cx={cx} cy={cy} r={r} />)
}

const toolGroups = [
  [
    {
      name: "Crosshair",
      icon: <path d="M13.500 2v8M13.500 17v8M2 13.500h8M17 13.500h8" />,
    },
    {
      name: "Vertical line",
      icon: (
        <>
          <path d="M13.500 3v8M13.500 15v9" />
          <Points dots={[[13.5, 13]]} />
        </>
      ),
    },
    {
      name: "Pitchfork",
      icon: (
        <>
          <path d="M6 9l6-6M5.500 20.500L18 8M17 20l7-7M5.500 11.500l8 8" />
          <Points dots={[[4, 10], [4, 21.5], [15, 21.5]]} />
        </>
      ),
    },
    {
      name: "Rectangle",
      icon: (
        <>
          <path d="M6.500 4.500h13M6.500 21.500h13M4.500 6.500v13M21.500 6.500v13" />
          <Points dots={[[4.5, 4.5], [21.5, 4.5], [4.5, 21.5], [21.5, 21.5]]} />
        </>
      ),
    },
    {
      name: "Text",
      icon: <path d="M7.500 8V4.500h12V8M13.500 4.500v17M11 21.500h5" />,
    },
    {
      name: "Pattern",
      icon: (
        <>
          <path d="M4.500 19L7 7M8.500 6.500l3.500 5M13 12l4.500-4M19.500 8l3 10.500M6 20l5-5.500M15 14.500l5.500 4" />
          <Points dots={[[7, 5], [18.5, 6.5], [12, 13], [4, 21], [22, 19]]} />
        </>
      ),
    },
    {
      name: "Position",
      icon: (
        <>
          <path d="M5.500 4.500h19M5.500 15.500h16M5.500 22.500h19M13.500 7v13M11.500 9l2-2 2 2M11.500 18l2 2 2-2" />
          <Points dots={[[3.5, 4.5], [3.5, 15.5], [23.5, 15.5], [3.5, 22.5]]} />
        </>
      ),
    },
    {
      name: "Arrow",
      icon: <path d="M14 6L8 13.500l6 7M8 13.500h13" strokeWidth="4" />,
    },
  ],
  [
    {
      name: "Ruler",
      icon: (
        <path d="M2.500 20L20 2.500a1 1 0 0 1 1.500 0l2.500 2.500a1 1 0 0 1 0 1.500L7 24a1 1 0 0 1-1.500 0L2.500 21.500a1 1 0 0 1 0-1.500zM6 17l2 2M9 14l2 2M12 11l2 2M15 8l2 2M18 5l2 2" />
      ),
    },
    {
      name: "Zoom in",
      icon: (
        <>
          <circle cx="11.500" cy="12.500" r="8" />
          <path d="M8 12.500h7M11.500 9v7M17.500 18l4.500 4" />
        </>
      ),
    },
  ],
  [
    {
      name: "Magnet",
      icon: <path d="M5.500 22.500V11a7.500 7.500 0 0 1 15 0v11.500h-5V11.500a2.500 2.500 0 0 0-5 0v11zM5.500 18.500h5M15.500 18.500h5" />,
    },
    {
      name: "Keep drawing",
      icon: (
        <path d="M2.500 13L15 1.500l4 3.500L7 17H2.500zM5 13.500L16 3.500M7.500 15L18 5.500M14.500 14.500h8v7.500h-8zM16.500 14.500v-3a2 2 0 0 1 4-.5M18.500 17v2.500" />
      ),
    },
    {
      name: "Lock drawings",
      icon: (
        <>
          <path d="M5.500 10.500h15v12h-15zM9.500 10.500V6.500a3.500 3.500 0 0 1 7 0v1" />
          <path d="M13 16v4" strokeWidth="2" />
        </>
      ),
    },
    {
      name: "Hide drawings",
      icon: (
        <>
          <path d="M3.500 13C8 4.500 18 4.500 22.500 13 18 21.500 8 21.500 3.500 13z" />
          <circle cx="13" cy="13" r="2.500" fill="#77787a" />
        </>
      ),
    },
  ],
  [
    {
      name: "Layers",
      icon: <path d="M13 3l9 6.500-9 6.500-9-6.500zM4.500 12.500L13 18.500l8.500-6M5 15l8 6 8-6M5.500 17.500L13 23l7.500-5.500" />,
    },
    {
      name: "Remove drawings",
      icon: <path d="M6.500 6.500h12v14a2 2 0 0 1-2 2h-8a2 2 0 0 1-2-2zM6 4.500h13M10 3.500h5M9.500 9.500v9M12.500 9.500v9M15.500 9.500v9" />,
    },
  ],
]

function DrawingTools() {
  return (
    <Sidebar>
      {toolGroups.map((group, index) => (
        <ToolGroup key={group[0].name} $last={index === toolGroups.length - 1}>
          {group.map((tool) => (
            <ToolButton key={tool.name} aria-label={tool.name} $active={tool.name === "Crosshair"}>
              <svg width="26" height="26" viewBox="0 0 26 26">
                {tool.icon}
              </svg>
            </ToolButton>
          ))}
        </ToolGroup>
      ))}
      <CollapseButton aria-label="Collapse tools">
        <svg width="5" height="8" fill="none" stroke="#c9d3da">
          <path d="M4 0.500L1.500 4L4 7.500" />
        </svg>
      </CollapseButton>
    </Sidebar>
  )
}

function ShapeToolbar() {
  return (
    <FloatingBar>
      <Grip>
        <svg width="7" height="14" fill="#d4d4d6">
          {[0, 5, 10].map((y) => (
            <path key={y} d={`M0 ${y}h2v2h-2zM4 ${y}h2v2h-2z`} />
          ))}
        </svg>
      </Grip>
      <FloatButton aria-label="Line colour">
        <Swatch>
          <MdEdit size={22} />
        </Swatch>
      </FloatButton>
      <FloatButton aria-label="Fill colour">
        <Swatch>
          <svg width="22" height="22" viewBox="0 -3 24 24" fill="currentColor">
            <path d="M16.560 8.940L7.620 0 6.210 1.410l2.380 2.380-5.150 5.150c-.59.59-.59 1.540 0 2.120l5.500 5.500c.29.29.68.44 1.060.44s.77-.15 1.060-.44l5.500-5.500c.59-.58.59-1.530 0-2.120zM5.210 10L10 5.210 14.790 10H5.210zM19 11.500s-2 2.170-2 3.500c0 1.100.9 2 2 2s2-.9 2-2c0-1.330-2-3.500-2-3.500z" />
          </svg>
        </Swatch>
      </FloatButton>
      <FloatButton aria-label="Line style">
        <svg width="20" height="2">
          <path d="M0 1h20" stroke="#758494" />
        </svg>
        <Caret $small />
      </FloatButton>
      <FloatButton aria-label="Settings">
        <svg width="16" height="16" fill="none" stroke="currentColor">
          <circle cx="8" cy="8" r="4.500" strokeWidth="2.200" />
          <circle cx="8" cy="8" r="6.700" strokeWidth="2" strokeDasharray="2.400 2.860" strokeDashoffset="1.200" />
        </svg>
      </FloatButton>
      <FloatButton aria-label="Visual order">
        <svg width="17" height="16" fill="currentColor">
          <rect x="3.500" width="13" height="13" rx="1.500" />
          <path d="M1 3v12h12" fill="none" stroke="currentColor" strokeWidth="1.300" />
        </svg>
        <Caret $small />
      </FloatButton>
      <FloatButton aria-label="Clone">
        <svg width="15" height="16" fill="none" stroke="currentColor">
          <rect x="3.500" y="3.500" width="10.500" height="12" rx="1" strokeWidth="1.300" />
          <path d="M1 13V1h11" strokeWidth="1.300" />
        </svg>
        <Caret $small />
      </FloatButton>
      <FloatButton aria-label="Lock">
        <MdLock size={17} />
      </FloatButton>
      <FloatButton aria-label="Hide">
        <MdVisibility size={17} />
      </FloatButton>
      <FloatButton aria-label="Remove">
        <svg width="12" height="16" fill="currentColor">
          <path d="M4 0h4v1h4v2H0V1h4zM1 4h10v10a2 2 0 0 1-2 2H3a2 2 0 0 1-2-2z" />
        </svg>
      </FloatButton>
    </FloatingBar>
  )
}

function PriceSeries() {
  return (
    <g transform="scale(0.333333)" fill="none" strokeLinejoin="round">
      <polygon points={bandArea} fill="#fff" opacity="0.1" />
      <polyline points={upper.join(" ")} stroke="#b4b4b4" strokeWidth="3" />
      <polyline points={lower.join(" ")} stroke="#b4b4b4" strokeWidth="3" />
      <polyline points={joinSeries("mid").join(" ")} stroke="#cacaca" strokeWidth="5" />
      {candles.map(({ x, high, low, top, bottom, color }) => (
        <g key={x} shapeRendering="crispEdges">
          <rect x={x - 1} y={high} width="3" height={low - high} fill="#fff" />
          <rect x={x - 4} y={top} width="9" height={Math.max(bottom - top, 3)} fill={color} />
        </g>
      ))}
      {averages.map(({ key, color }) => (
        <polyline key={key} points={joinSeries(key).join(" ")} stroke={color} strokeWidth="3" />
      ))}
      <polyline points={joinSeries("mid").join(" ")} stroke="#dcdcdc" strokeWidth="5" opacity="0.45" />
      <polyline points={joinSeries("dots").join(" ")} stroke="#d8d8d8" strokeWidth="4" strokeDasharray="4 8" />
      <polyline points={joinSeries("orange").join(" ")} stroke="#cf8a2c" strokeWidth="5" opacity="0.85" />
    </g>
  )
}

function Volume() {
  return (
    <g>
      {volumeBars.map(({ x, up, height }) => (
        <rect
          key={x}
          x={x - 1}
          y={924 - height}
          width={up ? 3 : 2.5}
          height={height}
          fill={up ? "#6ba64a" : "#94404a"}
        />
      ))}
      <polyline points={volumeAverage} fill="none" stroke="#98952a" strokeWidth="1.500" opacity="0.9" />
    </g>
  )
}

function TimeAxis() {
  return (
    <g fontSize="11" textAnchor="middle">
      <rect x="56" y="934" width="1503" height="19" fill={selectionColor} />
      <rect x="56" y="934" width="64" height="19" fill={activeColor} />
      <path d="M1560 934.500H4000" stroke="#5d5e5f" />
      <g fill="#b4b4b4" fontWeight="bold">
        {timeTicks.map(([x, label]) => (
          <text key={x} x={x} y="949">
            {label}
          </text>
        ))}
      </g>
      <text x="88" y="949" fill="#fff" fontWeight="bold">
        2009-03-16
      </text>
      <rect x="559" y="934" width="64" height="19" fill="#4f6f80" />
      <rect x="1045" y="934" width="64" height="19" fill="#4f6f80" />
      <text x="621" y="949" fill="#a4adb5" fontWeight="bold">
        8
      </text>
      <rect x="1495" y="934" width="64" height="19" fill={activeColor} />
      <text x="1527" y="949" fill="#fff" fontWeight="bold">
        2019-04-22
      </text>
      <rect x="1504" y="934" width="64" height="19" fill={tagColor} opacity="0.25" />
      <g fill="#0b0b0b">
        <text x="591" y="949">
          2013-04-29
        </text>
        <text x="1077" y="949">
          2016-06-06
        </text>
        <text x="1536" y="949">
          2019-05-13
        </text>
      </g>
      <path d="M591.500 934v4M1077.500 934v4M1536.500 934v4" stroke="#000" />
      <path d="M1527.500 934v4" stroke="#fff" />
    </g>
  )
}

function PlotArea() {
  return (
    <Plot role="img" aria-label="ADN.ASX weekly price, MACD and volume">
      <g transform="translate(-56 -94)">
        <g stroke="#fff" strokeOpacity="0.09">
          {priceTicks.map(([price]) => (
            <path key={price} d={`M56 ${priceToY(price)}H4000`} />
          ))}
          {volumeTicks.map(([y]) => (
            <path key={y} d={`M56 ${y}H4000`} />
          ))}
          <path d="M56 730.500H4000" />
          {timeTicks.map(([x]) => (
            <path key={x} d={`M${x + 0.5} 94V934`} />
          ))}
        </g>
        <path d="M591.500 94V711M1077.500 94V711M1536.500 94V711" stroke="#4c595b" />
        <PriceSeries />
        <path d="M56 266H1526V313H56zM56 387H1536V443H56z" fill="#fff" opacity="0.165" />
        <path d="M56 558.500H4000" stroke="#858585" strokeDasharray="2 1" />
        <path d="M591 183L1594 634" stroke="#e6e6e6" strokeDasharray="1 2" strokeWidth="1.300" fill="none" />
        {levels.map(({ x, y }) => (
          <path key={y} d={`M${x} ${y}H4000`} stroke={levelColor} />
        ))}
        <g fill={panelColor} stroke="#fff" strokeWidth="2">
          <circle cx="1526.500" cy="266.500" r="6" />
          <circle cx="1526.500" cy="312.500" r="6" />
        </g>
        <g fill="none">
          {histogram.map(({ x, height }) => (
            <path key={x} d={`M${x + 0.5} 731V${731 - height}`} stroke="#b5ae95" />
          ))}
          {macdLine.map((points) => (
            <polyline key={points} points={points} stroke="#c0c0c0" strokeWidth="1.600" />
          ))}
          {signalLine.map((points) => (
            <polyline key={points} points={points} stroke="#b52424" />
          ))}
        </g>
        <path d="M56 711.500H4000M56 742.500H4000" stroke="#5d5e5f" />
        <Volume />
        <path
          d="M1307.500 803L1403 864M1391.500 863.500L1403.500 864L1399 853.500M1427.500 860.500L1505 800.500M1493.500 801.500L1505.500 800L1502.500 811.500"
          fill="none"
          stroke="#6d84bd"
          strokeWidth="2"
        />
        <TimeAxis />
      </g>
    </Plot>
  )
}

function ValueAxis() {
  return (
    <Axis>
      <g transform="translate(0 -94)" fontSize="11" fill="#b4b4b4">
        <path d="M0.500 94V934M0 711.500H58M0 742.500H58" stroke="#5d5e5f" />
        <rect y="266" width="58" height="46" fill={selectionColor} />
        {priceTicks
          .filter(([, label]) => label)
          .map(([price, label]) => (
            <g key={price}>
              <path d={`M0 ${priceToY(price)}h4`} stroke="#6a6a6a" />
              <text x="7" y={priceToY(price) + 4.5}>
                {label}
              </text>
            </g>
          ))}
        <text x="7" y="735">
          0.0000
        </text>
        {volumeTicks.map(([y, label]) => (
          <g key={y}>
            <path d={`M0 ${y}h4`} stroke="#6a6a6a" />
            <text x="7" y={y + 4.5}>
              {label}
            </text>
          </g>
        ))}
        {priceTags.map(({ y, label, bg, color = "#0b1a1d", bold, width = 33 }) => (
          <g key={label}>
            <rect y={y} width={width} height="16" fill={bg} />
            <path d={`M0 ${y + 7.5}h3`} stroke={color} />
            <text x="7" y={y + 12} fill={color} fontWeight={bold ? "bold" : "normal"}>
              {label}
            </text>
          </g>
        ))}
      </g>
    </Axis>
  )
}

const quote = [
  ["O", "0.70"],
  ["H", "1.10"],
  ["L", "0.70"],
  ["C", "1.00"],
]

const ranges = ["1d", "5d", "1m", "6m", "1y", "5y", "All"]

function App() {
  const [symbol, setSymbol] = useState("ADN.ASX")
  const [autoSave, setAutoSave] = useState(true)

  return (
    <Window>
      <GlobalStyle />
      <TitleBar>
        <CloseButton aria-label="Close" />
        <h1>Chart (ADN.ASX)</h1>
      </TitleBar>
      <SymbolBar>
        <SymbolInput
          aria-label="Symbol"
          value={symbol}
          onChange={(event) => setSymbol(event.target.value)}
        />
        <BarButton>Add</BarButton>
        <BarButton>Compare</BarButton>
        <Spacer />
        <Settings>
          <BarButton>
            Events <Caret />
          </BarButton>
          <SwitchLabel>
            AutoSave
            <Switch
              type="checkbox"
              checked={autoSave}
              onChange={(event) => setAutoSave(event.target.checked)}
            />
          </SwitchLabel>
        </Settings>
      </SymbolBar>
      <Panel>
        <DrawingTools />
        <Content>
          <ChartBar>
            <PlainButton $size={16} $gap={20}>
              W
            </PlainButton>
            <PlainButton aria-label="Candles" $gap={29}>
              <svg width="14" height="20" fill="none" stroke="#dedede">
                <path d="M1.500 3.500h4v13h-4zM3.500 0v3.500M3.500 16.500V20M9.500 6.500h4v7h-4zM11.500 3v3.500M11.500 13.500V17" />
              </svg>
            </PlainButton>
            <PlainButton>
              <svg width="20" height="10" fill="none" stroke="#dedede">
                <path d="M0.500 8.500L6 3.500Q7 2.500 8 3.500L12 7Q13 8 14 7L19.500 1.500" />
              </svg>
              Indicators
            </PlainButton>
            <Spacer />
            <PlainButton aria-label="Chart settings" $gap={10}>
              <svg width="20" height="20" fill="none" stroke="#dedede" strokeLinejoin="round">
                <polygon points={gearPath(10, 9.5, 7.2, 8)} />
                <circle cx="10" cy="10" r="2.500" />
              </svg>
            </PlainButton>
            <BarButton $light $width={49} $gap={1} $radius="3px 0 0 3px">
              Save
            </BarButton>
            <BarButton $light $width={22} $gap={9} $radius="0 3px 3px 0" aria-label="Save options">
              <Caret />
            </BarButton>
            <BarButton $light $width={62}>
              Load <Caret />
            </BarButton>
          </ChartBar>
          <ChartRow>
            <PlotArea />
            <ValueAxis />
          </ChartRow>
          <Legend>
            <svg width="13" height="13" fill="none" stroke="#8a8a8a">
              <path d="M0.500 0.500h12v12h-12zM6.500 3v7M3 6.500h7" />
            </svg>
            {quote.map(([name, value]) => (
              <span key={name}>
                {name}
                <b>{value}</b>
              </span>
            ))}
          </Legend>
          <RangeBar>
            {ranges.map((range) => (
              <RangeButton key={range} $last={range === "All"}>
                {range}
              </RangeButton>
            ))}
          </RangeBar>
          <ShapeToolbar />
        </Content>
      </Panel>
    </Window>
  )
}

export default App
